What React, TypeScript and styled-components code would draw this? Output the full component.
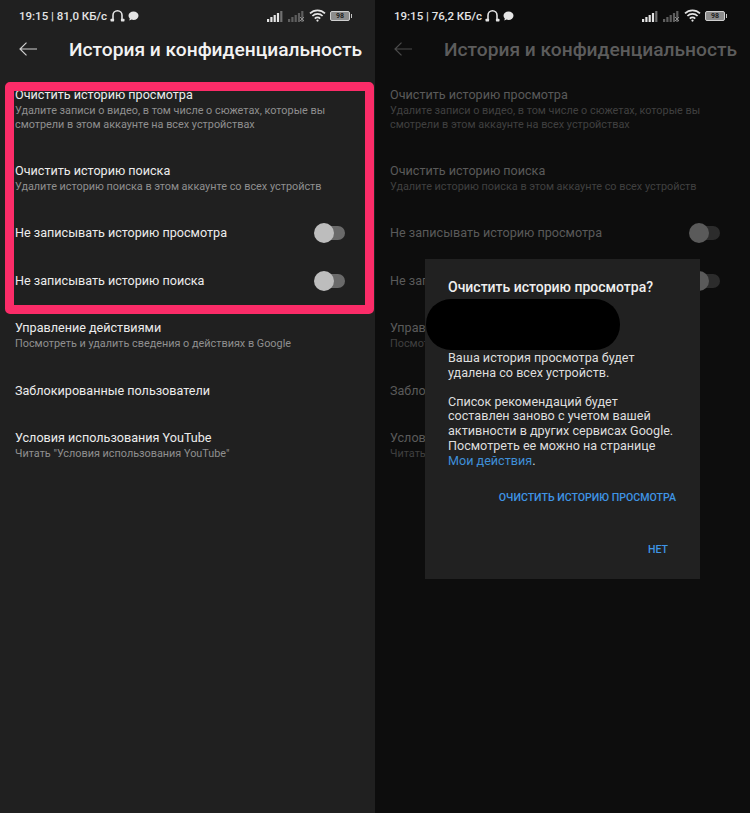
import styled, { createGlobalStyle } from "styled-components";

const GlobalStyle = createGlobalStyle`
  html, body {
    margin: 0;
    padding: 0;
    background: #0d0d0d;
  }
`;

const Page = styled.div`
  width: 750px;
  height: 813px;
  display: flex;
  overflow: hidden;
  font-family: Roboto, "Liberation Sans", sans-serif;
`;

const Screen = styled.div<{ $dim?: boolean }>`
  position: relative;
  width: 375px;
  height: 813px;
  box-sizing: border-box;
  background: ${(p) => (p.$dim ? "#0d0d0d" : "#202020")};
`;

const StatusBar = styled.div`
  height: 34px;
  display: flex;
  align-items: center;
  justify-content: space-between;
  padding: 0 22px 3px 19px;
  box-sizing: border-box;
  color: #e4e4e4;
`;

const StatusGroup = styled.div`
  display: flex;
  align-items: center;
  gap: 4px;
`;

const StatusLeft = styled(StatusGroup)`
  gap: 3px;
`;

const StatusText = styled.span`
  font-size: 11.5px;
  font-weight: 500;
  white-space: nowrap;
`;

const Header = styled.div<{ $dim?: boolean }>`
  height: 30px;
  display: flex;
  align-items: center;
  padding-left: 19px;
  color: ${(p) => (p.$dim ? "#5c5c5c" : "#f2f2f2")};
`;

const HeaderTitle = styled.h1`
  margin: 0 0 0 32px;
  font-size: 19.2px;
  font-weight: 500;
  white-space: nowrap;
`;

const List = styled.div`
  margin-top: 22px;
  padding: 0 30px 0 15px;
`;

const Row = styled.div<{ $gap?: number }>`
  margin-top: ${(p) => p.$gap ?? 0}px;
`;

const ToggleRow = styled.div`
  height: 48px;
  display: flex;
  align-items: center;
  justify-content: space-between;
`;

const RowTitle = styled.div<{ $dim?: boolean }>`
  font-size: 12.6px;
  line-height: 18px;
  color: ${(p) => (p.$dim ? "#5a5a5a" : "#ececec")};
  white-space: nowrap;
`;

const RowText = styled.div<{ $dim?: boolean }>`
  font-size: 10.85px;
  line-height: 14px;
  color: ${(p) => (p.$dim ? "#404040" : "#8f8f8f")};
  white-space: nowrap;
`;

const Toggle = styled.div<{ $dim?: boolean }>`
  position: relative;
  width: 30px;
  height: 14px;
  border-radius: 7px;
  background: ${(p) => (p.$dim ? "#2c2c2c" : "#6a6a6a")};
  &::before {
    content: "";
    position: absolute;
    left: -1px;
    top: -3px;
    width: 20px;
    height: 20px;
    border-radius: 50%;
    background: ${(p) => (p.$dim ? "#5a5a5a" : "#bdbdbd")};
  }
`;

const Highlight = styled.div`
  position: absolute;
  left: 5px;
  top: 82px;
  width: 369px;
  height: 232px;
  box-sizing: border-box;
  border: 9px solid #fb2c68;
  border-radius: 5px;
  pointer-events: none;
`;

const Dialog = styled.div`
  position: absolute;
  left: 50px;
  top: 259px;
  width: 275px;
  height: 320px;
  box-sizing: border-box;
  padding: 19px 23px 0;
  background: #212121;
  color: #dedede;
`;

const DialogTitle = styled.div`
  font-size: 14px;
  line-height: 18px;
  font-weight: 500;
  color: #efefef;
  white-space: nowrap;
`;

const Redaction = styled.div`
  width: 194px;
  height: 51px;
  margin: 3px 0 0 -22px;
  border-radius: 25px;
  background: #000;
`;

const Paragraph = styled.p`
  margin: 0 0 14px;
  font-size: 12.6px;
  line-height: 14.8px;
  white-space: nowrap;
`;

const DialogBody = styled.div`
  margin-top: 1px;
`;

const DialogLink = styled.span`
  color: #3f8fd8;
`;

const DialogActions = styled.div`
  margin: 22px 1px 0 0;
  display: flex;
  flex-direction: column;
  align-items: flex-end;
  gap: 38px;
`;

const ActionButton = styled.div<{ $inset?: number }>`
  font-size: 10.6px;
  line-height: 14px;
  font-weight: 500;
  color: #3f95e6;
  white-space: nowrap;
  margin-right: ${(p) => p.$inset ?? 0}px;
`;

function Headphones() {
  return (
    <svg width="15" height="15" viewBox="0 0 15 15" fill="none">
      <path
        d="M3 12V7.2a4.5 4.5 0 0 1 9 0V12"
        stroke="#e4e4e4"
        strokeWidth="1.6"
      />
      <rect x="0.5" y="10.8" width="3.6" height="2.6" rx="0.6" fill="#e4e4e4" />
      <rect x="10.9" y="10.8" width="3.6" height="2.6" rx="0.6" fill="#e4e4e4" />
    </svg>
  );
}

function ChatBubble() {
  return (
    <svg width="11" height="10" viewBox="0 0 11 10">
      <path
        d="M5.5 0.5a5 4.2 0 0 1 0 8.4c-.7 0-1.3-.1-1.9-.3L1.3 9.6l.5-2.1A4.2 4.2 0 0 1 .5 4.7a5 4.2 0 0 1 5-4.2z"
        fill="#e4e4e4"
      />
    </svg>
  );
}

function Signal({ faded }: { faded?: boolean }) {
  const heights = [3, 5, 7, 9, 11];
  return (
    <svg width="17" height="12" viewBox="0 0 17 12">
      {heights.map((h, i) => (
        <rect
          key={i}
          x={i * 3.3}
          y={12 - h}
          width="2.2"
          height={h}
          fill={faded ? "#5e5e5e" : i > 3 ? "#707070" : "#e4e4e4"}
        />
      ))}
      {faded && (
        <path d="M12 7l4 4M16 7l-4 4" stroke="#8a8a8a" strokeWidth="1" />
      )}
    </svg>
  );
}

function Wifi() {
  return (
    <svg
      width="17"
      height="13"
      viewBox="0 0 17 13"
      fill="none"
      stroke="#e4e4e4"
      strokeWidth="1.7"
    >
      <path d="M1 4.4a10.6 10.6 0 0 1 15 0" />
      <path d="M3.4 7a7.2 7.2 0 0 1 10.2 0" />
      <path d="M5.8 9.6a3.8 3.8 0 0 1 5.4 0" />
      <circle cx="8.5" cy="11.6" r="1.1" fill="#e4e4e4" stroke="none" />
    </svg>
  );
}

const Battery = styled.div`
  position: relative;
  width: 20px;
  height: 10px;
  border-radius: 2px;
  border: 1px solid #cfcfcf;
  background: #8c8c8c;
  box-sizing: border-box;
  font-size: 7px;
  line-height: 8px;
  font-weight: 700;
  text-align: center;
  color: #202020;
  margin-right: 3px;
  &::after {
    content: "";
    position: absolute;
    right: -3px;
    top: 2px;
    width: 1.5px;
    height: 4px;
    background: #c8c8c8;
  }
`;

const BackArrow = ({ color }: { color: string }) => (
  <svg
    width="18"
    height="14"
    viewBox="0 0 18 14"
    fill="none"
    stroke={color}
    strokeWidth="1.2"
  >
    <path d="M18 7H1M7.5 0.6L1 7l6.5 6.4" />
  </svg>
);

function Status({ speed }: { speed: string }) {
  return (
    <StatusBar>
      <StatusLeft>
        <StatusText>19:15 | {speed} КБ/с</StatusText>
        <Headphones />
        <ChatBubble />
      </StatusLeft>
      <StatusGroup>
        <Signal />
        <Signal faded />
        <Wifi />
        <Battery>98</Battery>
      </StatusGroup>
    </StatusBar>
  );
}

function Settings({ dim }: { dim?: boolean }) {
  return (
    <List>
      <Row>
        <RowTitle $dim={dim}>Очистить историю просмотра</RowTitle>
        <RowText $dim={dim}>
          Удалите записи о видео, в том числе о сюжетах, которые вы
        </RowText>
        <RowText $dim={dim}>смотрели в этом аккаунте на всех устройствах</RowText>
      </Row>
      <Row $gap={30}>
        <RowTitle $dim={dim}>Очистить историю поиска</RowTitle>
        <RowText $dim={dim}>
          Удалите историю поиска в этом аккаунте со всех устройств
        </RowText>
      </Row>
      <Row $gap={15}>
        <ToggleRow>
          <RowTitle $dim={dim}>Не записывать историю просмотра</RowTitle>
          <Toggle $dim={dim} />
        </ToggleRow>
        <ToggleRow>
          <RowTitle $dim={dim}>Не записывать историю поиска</RowTitle>
          <Toggle $dim={dim} />
        </ToggleRow>
      </Row>
      <Row $gap={14}>
        <RowTitle $dim={dim}>Управление действиями</RowTitle>
        <RowText $dim={dim}>
          Посмотреть и удалить сведения о действиях в Google
        </RowText>
      </Row>
      <Row $gap={31}>
        <RowTitle $dim={dim}>Заблокированные пользователи</RowTitle>
      </Row>
      <Row $gap={29}>
        <RowTitle $dim={dim}>Условия использования YouTube</RowTitle>
        <RowText $dim={dim}>Читать "Условия использования YouTube"</RowText>
      </Row>
    </List>
  );
}

export default function App() {
  return (
    <Page>
      <GlobalStyle />
      <Screen>
        <Status speed="81,0" />
        <Header>
          <BackArrow color="#d0d0d0" />
          <HeaderTitle>История и конфиденциальность</HeaderTitle>
        </Header>
        <Settings />
        <Highlight />
      </Screen>
      <Screen $dim>
        <Status speed="76,2" />
        <Header $dim>
          <BackArrow color="#4c4c4c" />
          <HeaderTitle>История и конфиденциальность</HeaderTitle>
        </Header>
        <Settings dim />
        <Dialog>
          <DialogTitle>Очистить историю просмотра?</DialogTitle>
          <Redaction />
          <DialogBody>
            <Paragraph>
              Ваша история просмотра будет
              <br />
              удалена со всех устройств.
            </Paragraph>
            <Paragraph>
              Список рекомендаций будет
              <br />
              составлен заново с учетом вашей
              <br />
              активности в других сервисах Google.
              <br />
              Посмотреть ее можно на странице
              <br />
              <DialogLink>Мои действия</DialogLink>.
            </Paragraph>
          </DialogBody>
          <DialogActions>
            <ActionButton>ОЧИСТИТЬ ИСТОРИЮ ПРОСМОТРА</ActionButton>
            <ActionButton $inset={8}>НЕТ</ActionButton>
          </DialogActions>
        </Dialog>
      </Screen>
    </Page>
  );
}
